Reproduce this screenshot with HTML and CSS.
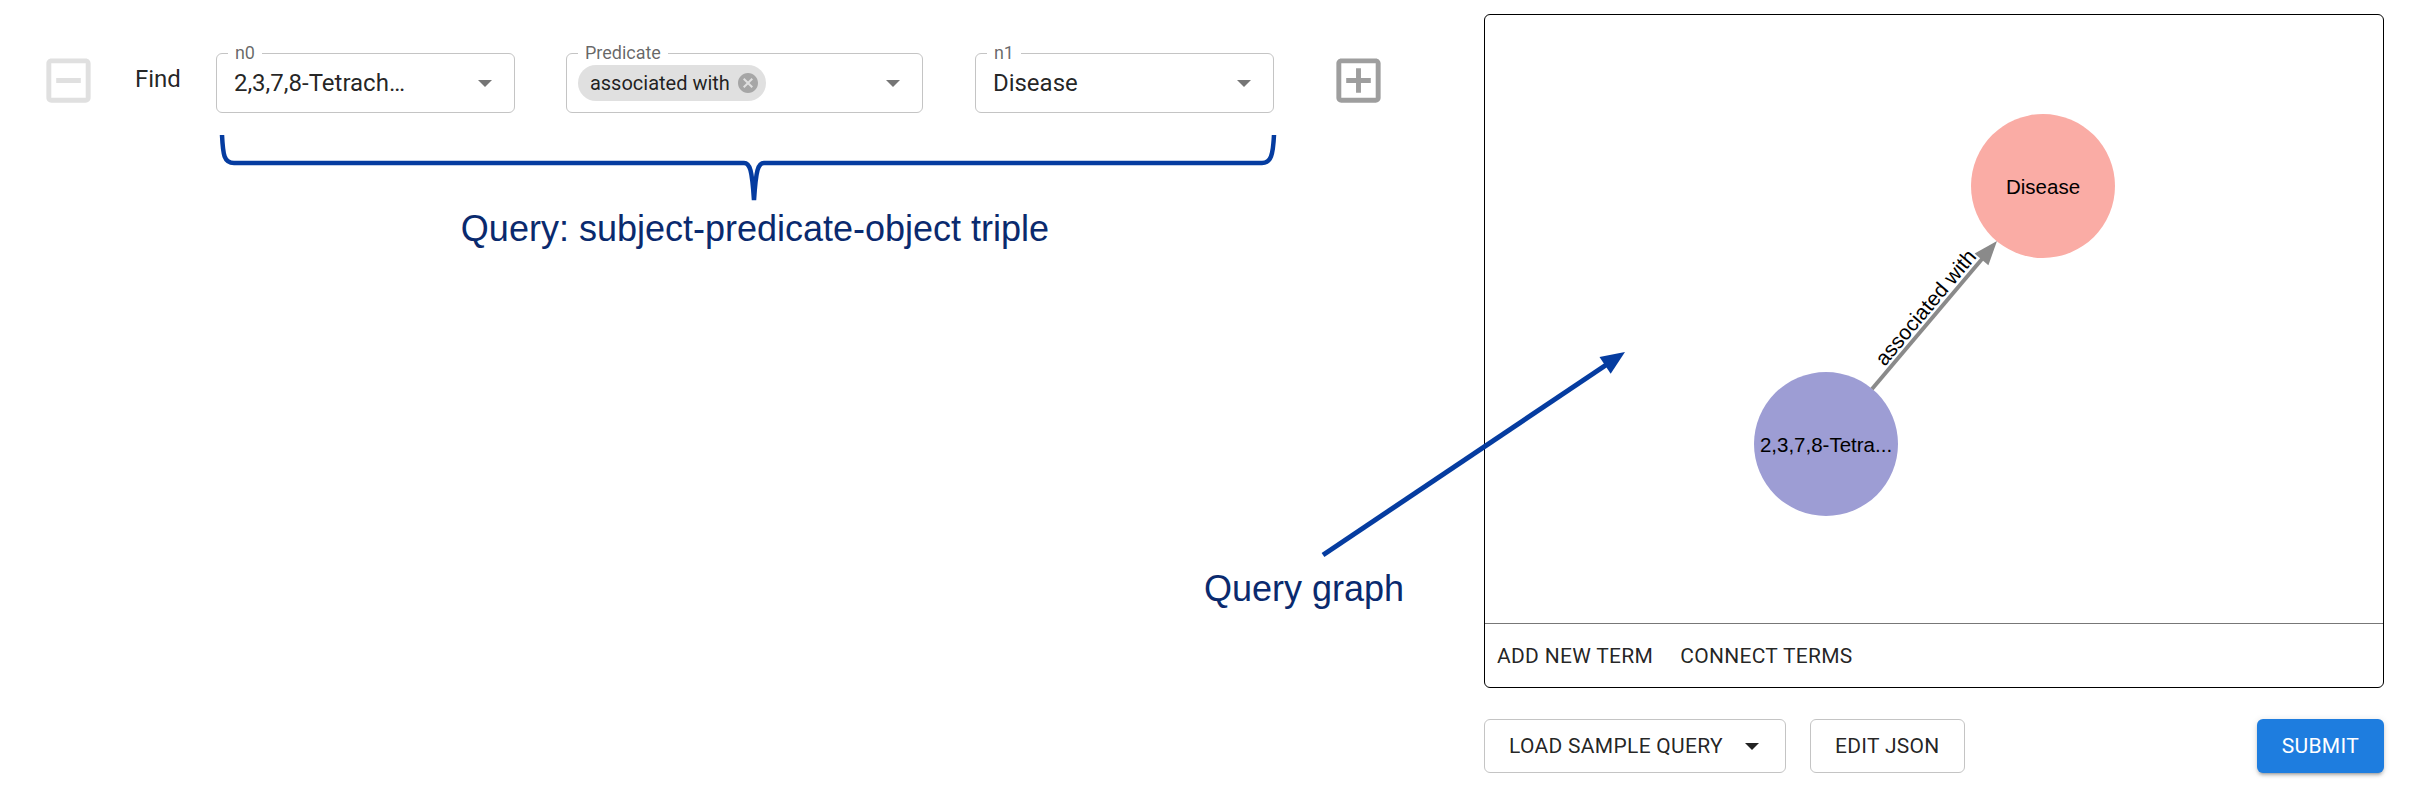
FILE: index.html
```html
<!DOCTYPE html>
<html lang="en">
<head>
    <meta charset="UTF-8">
    <meta name="viewport" content="width=device-width, initial-scale=1.0">
    <title>Query Builder</title>
    <link rel="stylesheet" href="styles.css">
</head>
<body>
    <div class="page">
        <section class="builder">
            <div class="triple-row">
                <svg class="row-icon icon-remove" viewBox="0 0 24 24"><path d="M19 3H5c-1.11 0-2 .9-2 2v14c0 1.1.89 2 2 2h14c1.1 0 2-.9 2-2V5c0-1.1-.9-2-2-2zm0 16H5V5h14v14zM7 11h10v2H7z"/></svg>
                <span class="find-label">Find</span>

                <div class="field field-node">
                    <span class="field-label">n0</span>
                    <span class="field-value">2,3,7,8-Tetrach…</span>
                    <svg class="field-arrow" viewBox="0 0 14 7"><path d="M0 0h14L7 7z"/></svg>
                </div>

                <div class="field field-predicate">
                    <span class="field-label">Predicate</span>
                    <span class="chip">
                        associated with
                        <svg class="chip-delete" viewBox="0 0 24 24"><path d="M12 2C6.47 2 2 6.47 2 12s4.47 10 10 10 10-4.47 10-10S17.53 2 12 2zm5 13.59L15.59 17 12 13.41 8.41 17 7 15.59 10.59 12 7 8.41 8.41 7 12 10.59 15.59 7 17 8.41 13.41 12 17 15.59z"/></svg>
                    </span>
                    <span class="field-value"></span>
                    <svg class="field-arrow" viewBox="0 0 14 7"><path d="M0 0h14L7 7z"/></svg>
                </div>

                <div class="field field-node">
                    <span class="field-label">n1</span>
                    <span class="field-value">Disease</span>
                    <svg class="field-arrow" viewBox="0 0 14 7"><path d="M0 0h14L7 7z"/></svg>
                </div>

                <svg class="row-icon icon-add" viewBox="0 0 24 24"><path d="M19 3H5c-1.11 0-2 .9-2 2v14c0 1.1.89 2 2 2h14c1.1 0 2-.9 2-2V5c0-1.1-.9-2-2-2zm0 16H5V5h14v14zm-8-2h2v-4h4v-2h-4V7h-2v4H7v2h4z"/></svg>
            </div>
        </section>

        <section class="graph-panel">
            <div class="graph-box">
                <svg class="graph-canvas" viewBox="0 0 898 608">
                    <circle class="node node-disease" cx="558" cy="171" r="72"/>
                    <circle class="node node-chemical" cx="341" cy="429" r="72"/>
                    <line class="edge" x1="387" y1="374" x2="497" y2="244"/>
                    <polygon class="edge-head" points="512,226 503.4,250.2 489.6,238.6"/>
                    <text class="edge-label" transform="translate(446 297) rotate(-49.9)">associated with</text>
                    <text class="node-label" x="558" y="171">Disease</text>
                    <text class="node-label" x="341" y="429">2,3,7,8-Tetra...</text>
                </svg>
                <div class="graph-toolbar">
                    <button class="text-button">ADD NEW TERM</button>
                    <button class="text-button">CONNECT TERMS</button>
                </div>
            </div>
            <div class="actions">
                <button class="outlined-button">
                    LOAD SAMPLE QUERY
                    <svg class="button-arrow" viewBox="0 0 14 7"><path d="M0 0h14L7 7z"/></svg>
                </button>
                <button class="outlined-button">EDIT JSON</button>
                <button class="submit-button">SUBMIT</button>
            </div>
        </section>
    </div>

    <!-- annotation layer drawn over the ui -->
    <svg class="annotations" viewBox="0 0 2424 801">
        <path class="note-stroke" d="M222 135 C223 155 224 163 234 163 L744 163 C750 163 752 170 754 200 C756 170 758 163 764 163 L1262 163 C1271 163 1273 155 1274 135"/>
        <text class="note-text" x="755" y="241" text-anchor="middle">Query: subject-predicate-object triple</text>
        <line class="note-stroke note-arrow" x1="1323" y1="555" x2="1606" y2="365"/>
        <polygon class="note-head" points="1625,352 1610.7,373.7 1599.5,357.1"/>
        <text class="note-text" x="1204" y="601">Query graph</text>
    </svg>
</body>
</html>
```

FILE: styles.css
```css
body {
    margin: 0;
    font-family: Roboto, "Liberation Sans", sans-serif;
    color: rgba(0, 0, 0, 0.87);
    background: #fff;
}
.page {
    display: flex;
    height: 801px;
    overflow: hidden;
}
.builder {
    flex: 1;
    padding: 53px 0 0 39px;
}
.triple-row {
    display: flex;
    align-items: center;
    height: 60px;
}
.row-icon {
    flex: none;
    width: 59px;
    height: 59px;
    margin-bottom: 6px;
}
.icon-remove {
    fill: #e0e0e0;
}
.icon-add {
    fill: #9e9e9e;
    margin-left: 55px;
}
.find-label {
    font-size: 24px;
    line-height: 28px;
    margin: 0 35px 8px 37px;
}
.field {
    position: relative;
    box-sizing: border-box;
    display: flex;
    align-items: center;
    height: 60px;
    padding: 0 22px 0 17px;
    border: 1px solid #c4c4c4;
    border-radius: 6px;
}
.field-node {
    width: 299px;
}
.field-predicate {
    width: 357px;
    padding-left: 11px;
    margin: 0 52px 0 51px;
}
.field-label {
    position: absolute;
    top: -10px;
    left: 11px;
    padding: 0 7px;
    background: #fff;
    font-size: 18px;
    line-height: 18px;
    color: rgba(0, 0, 0, 0.6);
}
.field-value {
    flex: 1;
    font-size: 24px;
    white-space: nowrap;
}
.field-arrow {
    flex: none;
    width: 14px;
    height: 7px;
    fill: #757575;
}
.chip {
    display: flex;
    align-items: center;
    height: 36px;
    padding: 0 6px 0 12px;
    border-radius: 18px;
    background: #e0e0e0;
    font-size: 20px;
    white-space: nowrap;
}
.chip-delete {
    width: 24px;
    height: 24px;
    margin-left: 6px;
    fill: #a6a6a6;
}

.graph-panel {
    flex: none;
    width: 900px;
    margin: 14px 40px 0 0;
}
.graph-box {
    border: 1px solid #000;
    border-radius: 6px;
}
.graph-canvas {
    display: block;
    width: 898px;
    height: 608px;
}
.node-disease {
    fill: #faaca5;
}
.node-chemical {
    fill: #9d9dd4;
}
.edge {
    stroke: #8a8a8a;
    stroke-width: 4;
}
.edge-head {
    fill: #8a8a8a;
}
.edge-label, .node-label {
    font-family: "Liberation Sans", Arial, sans-serif;
    font-size: 21px;
    fill: #000;
}
.edge-label {
    text-anchor: middle;
}
.node-label {
    font-size: 20.5px;
    text-anchor: middle;
    dominant-baseline: central;
}
.graph-toolbar {
    display: flex;
    align-items: center;
    gap: 3px;
    height: 63px;
    border-top: 1px solid #777;
}
button {
    font-family: Roboto, "Liberation Sans", sans-serif;
    font-size: 21px;
    font-weight: 400;
    letter-spacing: 0.3px;
    color: rgba(0, 0, 0, 0.87);
    cursor: pointer;
}
.text-button {
    padding: 0 12px;
    border: none;
    background: none;
}
.actions {
    display: flex;
    gap: 24px;
    margin-top: 31px;
}
.outlined-button {
    display: flex;
    align-items: center;
    height: 54px;
    padding: 0 24px;
    border: 1px solid #c4c4c4;
    border-radius: 6px;
    background: #fff;
}
.button-arrow {
    width: 14px;
    height: 7px;
    margin: 0 2px 0 22px;
    fill: #222;
}
.submit-button {
    margin-left: auto;
    height: 54px;
    padding: 0 25px;
    border: none;
    border-radius: 6px;
    background: #1e7ddf;
    color: #fff;
    box-shadow: 0 4px 2px -3px rgba(0, 0, 0, 0.2), 0 3px 3px 0 rgba(0, 0, 0, 0.14), 0 1px 7px 0 rgba(0, 0, 0, 0.12);
}

.annotations {
    position: absolute;
    top: 0;
    left: 0;
    width: 2424px;
    height: 801px;
    pointer-events: none;
}
.note-stroke {
    fill: none;
    stroke: #053ca0;
    stroke-width: 4.5;
}
.note-arrow {
    stroke-width: 5;
}
.note-head {
    fill: #053ca0;
}
.note-text {
    font-family: "Liberation Sans", Arial, sans-serif;
    font-size: 36px;
    fill: #0a2a6e;
}
```
